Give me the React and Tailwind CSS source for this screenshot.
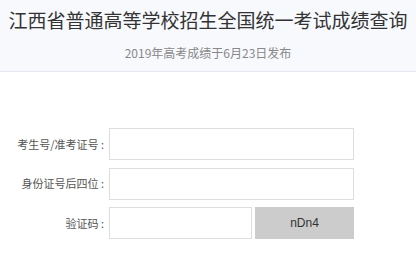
import React from 'react'

const font = { fontFamily: '"Noto Sans CJK SC", sans-serif' }

function Row({ label, children }) {
  return (
    <div className="flex items-center h-[32px]">
      <label className="w-[109px] shrink-0 pr-[5px] text-right text-[11px] text-[#555] whitespace-nowrap">
        {label} :
      </label>
      {children}
    </div>
  )
}

export default function App() {
  const [num, setNum] = React.useState('')
  const [id, setId] = React.useState('')
  const [code, setCode] = React.useState('')

  return (
    <div className="w-[416px] h-[262px] bg-white overflow-hidden" style={font}>
      <div className="h-[72px] bg-[#f7f9fd] border-b border-[#e4e8f0] flex flex-col items-center">
        <h1 className="mt-[7px] text-[19px] leading-[26px] text-[#333] font-normal whitespace-nowrap">
          江西省普通高等学校招生全国统一考试成绩查询
        </h1>
        <p className="mt-[12px] text-[12px] leading-[16px] text-[#888]">2019年高考成绩于6月23日发布</p>
      </div>
      <form className="mt-[56px] flex flex-col gap-[7.5px]">
        <Row label="考生号/准考证号">
          <input
            value={num}
            onChange={e => setNum(e.target.value)}
            className="w-[245px] h-full border border-[#ddd] outline-none px-2 text-[12px]"
          />
        </Row>
        <Row label="身份证号后四位">
          <input
            value={id}
            onChange={e => setId(e.target.value)}
            className="w-[245px] h-full border border-[#ddd] outline-none px-2 text-[12px]"
          />
        </Row>
        <Row label="验证码">
          <input
            value={code}
            onChange={e => setCode(e.target.value)}
            className="w-[143px] h-full border border-[#ddd] outline-none px-2 text-[12px]"
          />
          <button
            type="button"
            className="ml-[3px] w-[99px] h-full bg-[#ccc] text-[12px] text-[#333]"
            style={{ fontFamily: '"Liberation Sans", Arial, sans-serif' }}
          >
            nDn4
          </button>
        </Row>
      </form>
    </div>
  )
}
